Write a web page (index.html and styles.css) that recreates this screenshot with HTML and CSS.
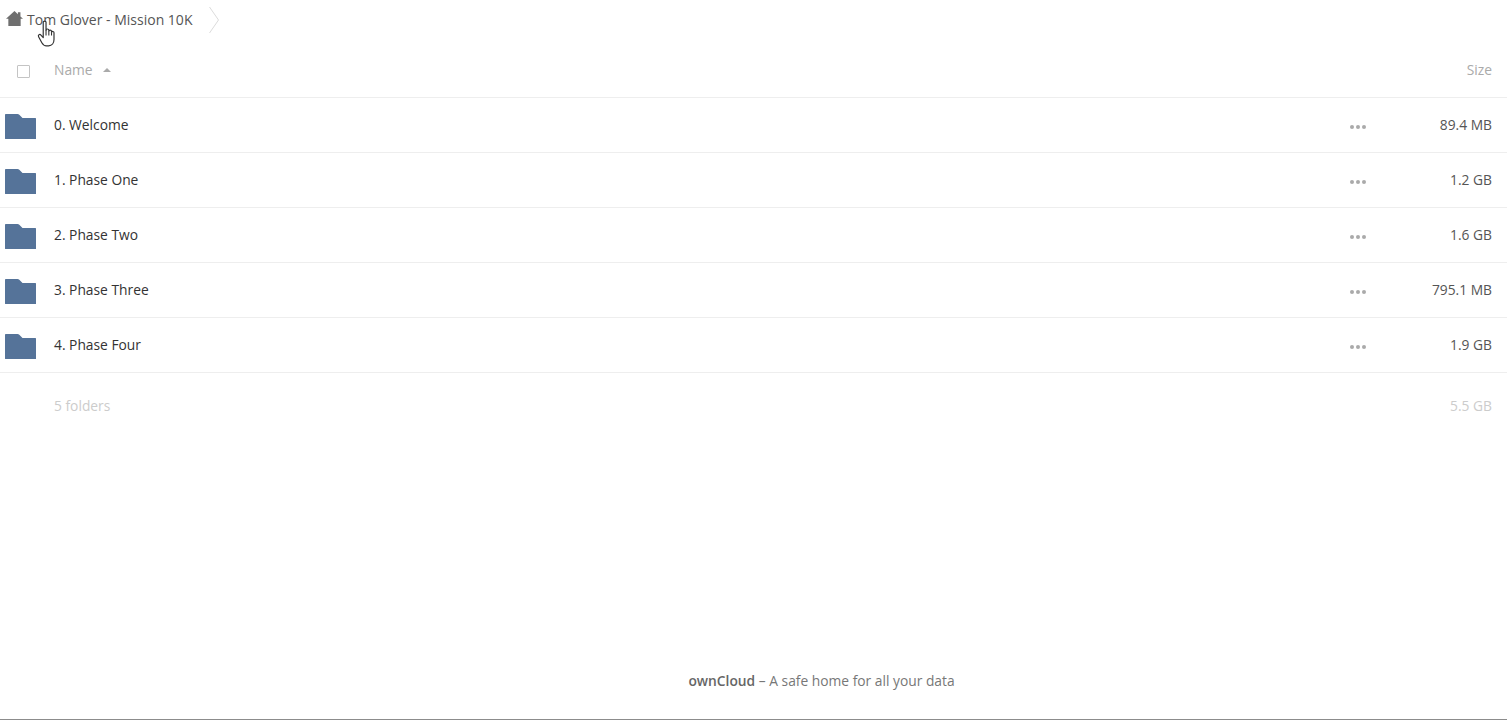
FILE: index.html
```html
<!DOCTYPE html>
<html lang="en">

<head>
    <meta charset="UTF-8">
    <meta name="viewport" content="width=device-width, initial-scale=1.0">
    <title>Tom Glover - Mission 10K</title>
    <link rel="stylesheet" href="styles.css">
</head>

<body>
    <!-- Breadcrumb -->
    <div class="crumbs">
        <svg class="home-icon" viewBox="0 0 16 14">
            <path d="M8 0 0 7.300h2.200V14h11.600V7.300H16L13.600 5.100V1h-2.400v2z" fill="#6f6f6f"/>
        </svg>
        <span class="crumb-title">Tom Glover - Mission 10K</span>
        <svg class="crumb-sep" viewBox="0 0 12 28">
            <path d="M1.500 1 10.500 14 1.500 27" fill="none" stroke="#dcdcdc" stroke-width="1"/>
        </svg>
        <svg class="cursor-icon" viewBox="0 0 18 26">
            <path d="M5.500 2.200c0-1.500 2.600-1.500 2.600 0v7.200c.2-1.400 2.500-1.400 2.600 0v1c.2-1.300 2.400-1.300 2.500 0v1c.3-1.100 2.300-1 2.300.4v6.400c0 3-1.800 5.800-5 5.800H8.500c-2.200 0-3.300-1.100-4.300-2.900L1.200 15.500c-.8-1.500 1-2.800 2.200-1.500l2.100 2.400z" fill="#fff" stroke="#333" stroke-width="1.100" stroke-linejoin="round"/>
            <path d="M8.100 9.400v5M10.700 10.400v4M13.200 11.400v3" fill="none" stroke="#333" stroke-width="1"/>
        </svg>
    </div>

    <!-- File list -->
    <div class="file-header">
        <span class="checkbox"></span>
        <span class="head-name">Name</span>
        <span class="sort-arrow"></span>
        <span class="head-size">Size</span>
    </div>

    <div class="file-row">
        <svg class="folder" viewBox="0 0 31 25"><path d="M0 1C0 .4.400 0 1 0h11.500c.8 0 1.200.2 1.800.8L17.500 4H30.400c.3 0 .6.300.6.600V25H.6c-.3 0-.6-.3-.6-.6z" fill="#557399"/></svg>
        <span class="file-name">0. Welcome</span>
        <span class="dots"><i></i><i></i><i></i></span>
        <span class="file-size">89.4 MB</span>
    </div>
    <div class="file-row">
        <svg class="folder" viewBox="0 0 31 25"><path d="M0 1C0 .4.400 0 1 0h11.500c.8 0 1.200.2 1.800.8L17.500 4H30.400c.3 0 .6.300.6.600V25H.6c-.3 0-.6-.3-.6-.6z" fill="#557399"/></svg>
        <span class="file-name">1. Phase One</span>
        <span class="dots"><i></i><i></i><i></i></span>
        <span class="file-size">1.2 GB</span>
    </div>
    <div class="file-row">
        <svg class="folder" viewBox="0 0 31 25"><path d="M0 1C0 .4.400 0 1 0h11.500c.8 0 1.200.2 1.800.8L17.500 4H30.400c.3 0 .6.300.6.600V25H.6c-.3 0-.6-.3-.6-.6z" fill="#557399"/></svg>
        <span class="file-name">2. Phase Two</span>
        <span class="dots"><i></i><i></i><i></i></span>
        <span class="file-size">1.6 GB</span>
    </div>
    <div class="file-row">
        <svg class="folder" viewBox="0 0 31 25"><path d="M0 1C0 .4.400 0 1 0h11.500c.8 0 1.200.2 1.800.8L17.500 4H30.400c.3 0 .6.300.6.600V25H.6c-.3 0-.6-.3-.6-.6z" fill="#557399"/></svg>
        <span class="file-name">3. Phase Three</span>
        <span class="dots"><i></i><i></i><i></i></span>
        <span class="file-size">795.1 MB</span>
    </div>
    <div class="file-row">
        <svg class="folder" viewBox="0 0 31 25"><path d="M0 1C0 .4.400 0 1 0h11.500c.8 0 1.200.2 1.800.8L17.500 4H30.400c.3 0 .6.300.6.600V25H.6c-.3 0-.6-.3-.6-.6z" fill="#557399"/></svg>
        <span class="file-name">4. Phase Four</span>
        <span class="dots"><i></i><i></i><i></i></span>
        <span class="file-size">1.9 GB</span>
    </div>

    <div class="summary">
        <span>5 folders</span>
        <span>5.5 GB</span>
    </div>

    <div class="footer"><b>ownCloud</b> – A safe home for all your data</div>
</body>

</html>
```

FILE: styles.css
```css
body {
    margin: 0;
    box-sizing: border-box;
    height: 720px;
    overflow: hidden;
    display: flex;
    flex-direction: column;
    background-color: #fff;
    font-family: "Open Sans", sans-serif;
    font-size: 13.8px;
    color: #555;
    border-bottom: 1px solid #8c8c8c;
}

.crumbs {
    position: relative;
    height: 42px;
    display: flex;
    align-items: center;
    padding-left: 6px;
}

.home-icon {
    width: 17px;
    height: 15px;
    margin-top: -5px;
}

.crumb-title {
    margin-left: 4px;
    margin-top: -3px;
    font-size: 14px;
    color: #555;
}

.crumb-sep {
    width: 12px;
    height: 28px;
    margin-left: 16px;
    margin-top: -3px;
}

.cursor-icon {
    position: absolute;
    left: 37px;
    top: 20px;
    width: 20px;
    height: 28px;
}

.file-header {
    height: 54px;
    display: flex;
    align-items: center;
    padding-bottom: 1px;
    border-bottom: 1px solid #eee;
    color: #aaa;
}

.checkbox {
    width: 11px;
    height: 11px;
    margin-left: 17px;
    margin-top: 5px;
    border: 1px solid #c4c4c4;
    border-radius: 1px;
}

.head-name {
    margin-left: 24px;
}

.sort-arrow {
    margin-left: 10px;
    margin-top: 2px;
    border-left: 4px solid transparent;
    border-right: 4px solid transparent;
    border-bottom: 4px solid #aaa;
}

.head-size {
    margin-left: auto;
    margin-right: 15px;
}

.file-row {
    height: 54px;
    display: flex;
    align-items: center;
    border-bottom: 1px solid #eee;
}

.folder {
    width: 31px;
    height: 25px;
    margin-left: 5px;
    margin-top: 2px;
}

.file-name {
    margin-left: 18px;
    margin-top: -2px;
    color: #333;
}

.dots {
    margin-left: auto;
    margin-top: 3px;
    display: flex;
    gap: 2px;
}

.dots i {
    width: 4px;
    height: 4px;
    border-radius: 50%;
    background-color: #aaa;
}

.file-size {
    width: 126px;
    padding-right: 15px;
    margin-top: -2px;
    text-align: right;
    color: #555;
}

.summary {
    display: flex;
    justify-content: space-between;
    padding: 23px 15px 0 54px;
    color: #ccc;
}

.footer {
    margin-top: auto;
    margin-bottom: 29px;
    padding-left: 136px;
    text-align: center;
    color: #777;
}

.footer b {
    font-weight: 600;
    color: #666;
}
```
